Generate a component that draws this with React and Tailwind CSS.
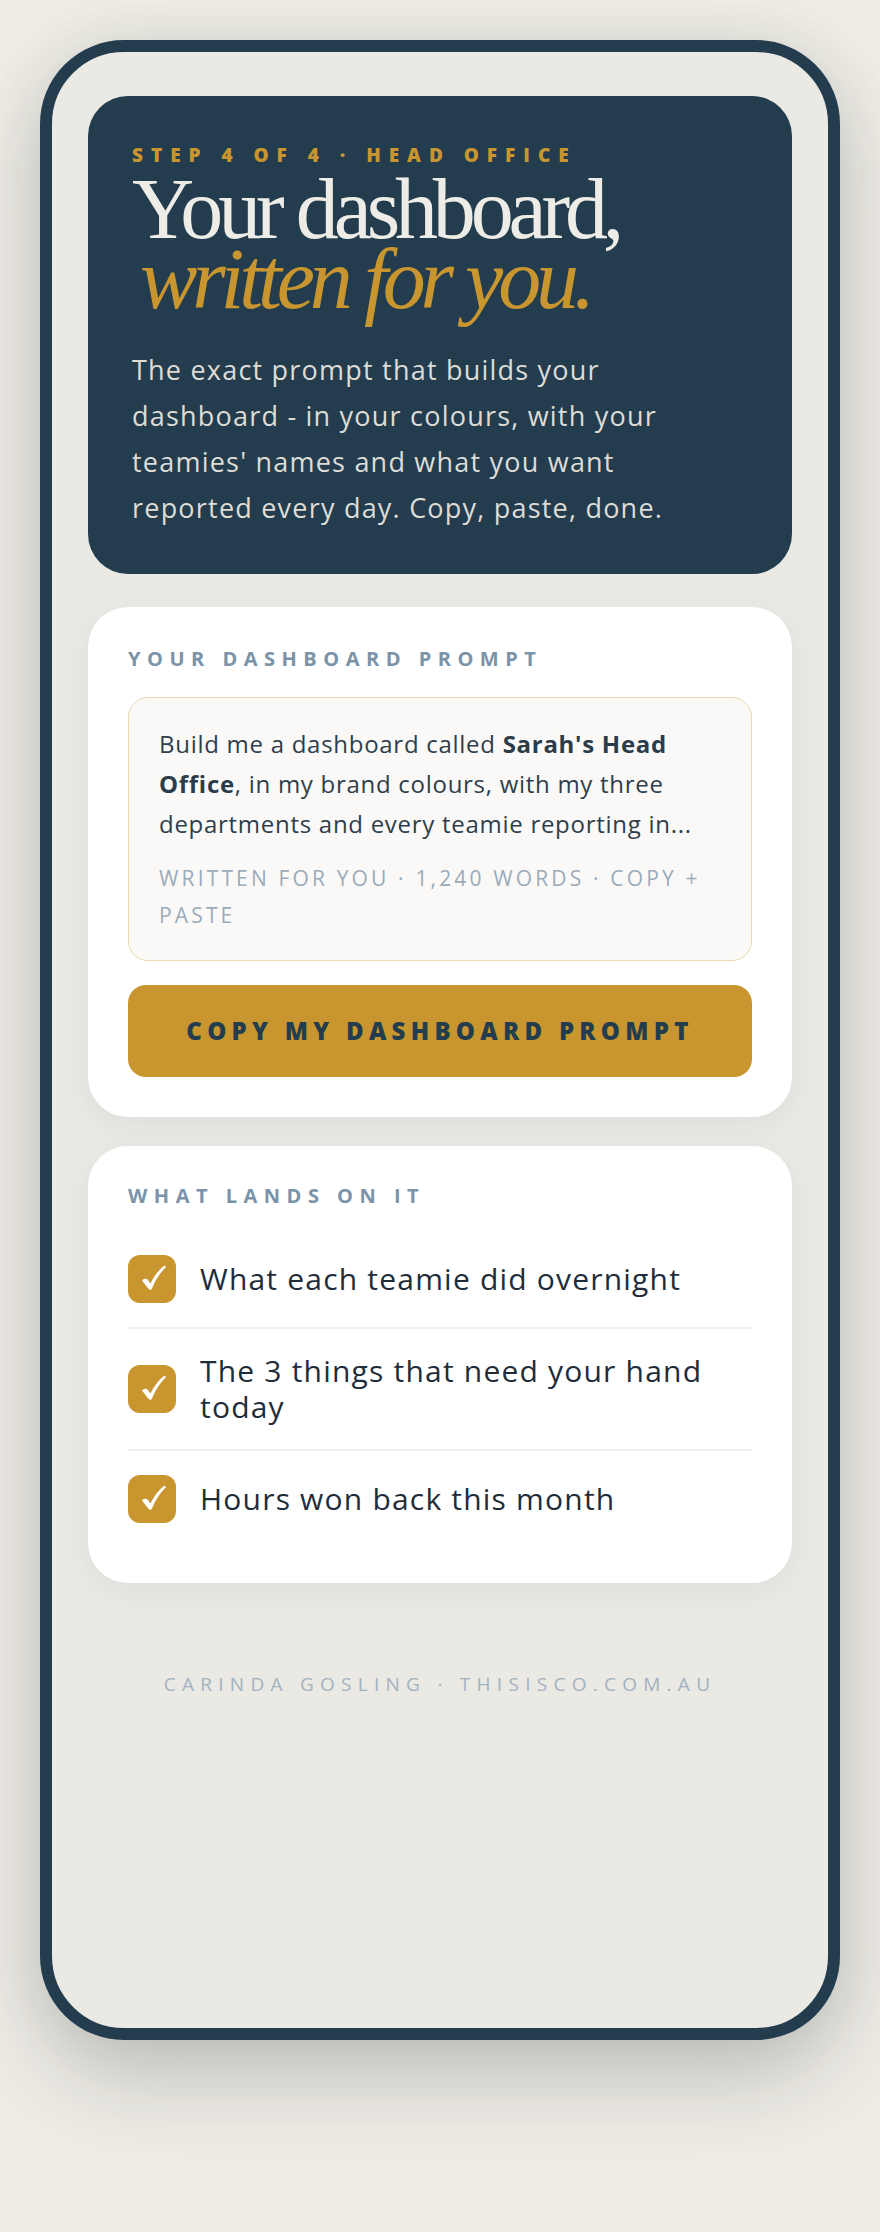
import React from 'react';

const items = [
  'What each teamie did overnight',
  'The 3 things that need your hand today',
  'Hours won back this month',
];

function CheckBox() {
  return (
    <span className="flex h-12 w-12 shrink-0 items-center justify-center rounded-xl bg-[#c9952e]">
      <svg viewBox="0 0 48 48" className="h-12 w-12" fill="#ffffff">
        <path d="M14 25.5 C15.5 23.5 18 23 19.5 24.5 L22.5 28.5 C26 21 30.5 15 36.5 10.5 L38 12 C32 18 27 25.5 24 33.5 C23.5 35 21.5 35.3 20.6 34 Z" />
      </svg>
    </span>
  );
}

export default function App() {
  return (
    <div className="min-h-screen bg-[#f0ede6] px-10 pt-10 pb-48 font-['Open_Sans',sans-serif]">
      <div className="h-[2000px] rounded-[84px] border-[12px] border-[#233d4f] bg-[#eae9e4] px-9 pt-11 shadow-[0_40px_90px_rgba(30,45,55,0.22),0_0_60px_rgba(30,45,55,0.08)]">
        {/* header */}
        <section className="rounded-[40px] bg-[#233d4f] px-11 pt-[50px] pb-[43px]">
          <p className="text-[19px] font-extrabold uppercase leading-none tracking-[0.42em] text-[#c9952e]">
            Step 4 of 4 · Head Office
          </p>
          <h1 className="mt-[9px] font-['Liberation_Serif',serif] text-[86px] leading-[70px] tracking-[-0.06em] text-[#eeece6]">
            Your dashboard,
            <br />
            <em className="ml-2 text-[#c9952e]">written for you.</em>
          </h1>
          <p className="mt-[33px] max-w-[580px] text-[27px] leading-[46px] tracking-[0.045em] text-[#dedcd5]">
            The exact prompt that builds your dashboard - in your colours, with your teamies' names and what you want reported every day. Copy, paste, done.
          </p>
        </section>

        {/* prompt card */}
        <section className="mt-[33px] rounded-[40px] bg-white px-10 pt-[42px] pb-10 shadow-[0_8px_30px_rgba(35,61,79,0.06)]">
          <p className="text-[20px] font-bold uppercase leading-none tracking-[0.325em] text-[#7a93a8]">
            Your dashboard prompt
          </p>
          <div className="mt-[28px] rounded-[20px] border-[1.5px] border-[#e8d9b0] bg-[#faf9f7] px-[30px] py-[26px]">
            <p className="text-[24px] leading-[40px] tracking-[0.03em] text-[#2e3e4b]">
              Build me a dashboard called <b className="font-bold text-[#2a3c4a]">Sarah's Head Office</b>, in my brand colours, with my three departments and every teamie reporting in...
            </p>
            <p className="mt-4 text-[21px] uppercase leading-[37px] tracking-[0.15em] text-[#9aabba]">
              Written for you · 1,240 words · Copy + paste
            </p>
          </div>
          <button className="mt-6 flex h-[92px] w-full items-center justify-center rounded-[18px] bg-[#c9952e] text-[24px] font-extrabold uppercase tracking-[0.22em] text-[#233d4f]">
            Copy my dashboard prompt
          </button>
        </section>

        {/* checklist card */}
        <section className="mt-[29px] rounded-[40px] bg-white px-10 pt-10 pb-[36px] shadow-[0_8px_30px_rgba(35,61,79,0.06)]">
          <p className="text-[20px] font-bold uppercase leading-none tracking-[0.325em] text-[#7a93a8]">
            What lands on it
          </p>
          <ul className="mt-[25px]">
            {items.map((item) => (
              <li
                key={item}
                className="flex items-center gap-6 border-b-2 border-[#f0f0ee] py-6 last:border-b-0"
              >
                <CheckBox />
                <span className="text-[30px] leading-[36px] tracking-[0.04em] text-[#1f2d3a]">{item}</span>
              </li>
            ))}
          </ul>
        </section>

        <p className="mt-[92px] text-center text-[19px] uppercase leading-none tracking-[0.33em] text-[#a3b2bf]">
          Carinda Gosling · thisisco.com.au
        </p>
      </div>
    </div>
  );
}
